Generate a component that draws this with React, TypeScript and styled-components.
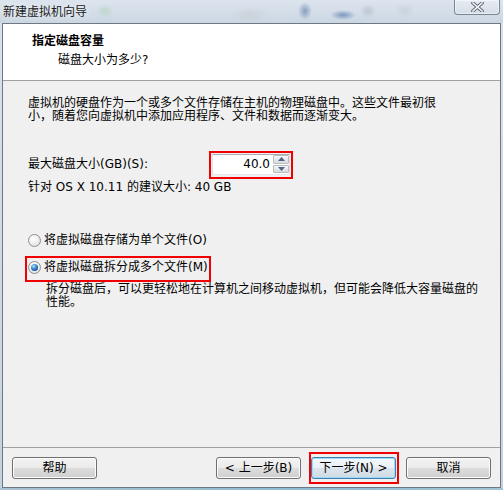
import React from "react";
import styled, { createGlobalStyle } from "styled-components";

const GlobalStyle = createGlobalStyle`
  html, body { margin: 0; padding: 0; }
  body {
    width: 503px;
    height: 490px;
    overflow: hidden;
    background: #c9d6e3;
    font-family: "DejaVu Sans", "Noto Sans CJK SC", sans-serif;
    font-size: 12px;
    color: #000;
  }
`;

const Window = styled.div`
  width: 503px;
  height: 490px;
  display: flex;
  flex-direction: column;
  background: linear-gradient(180deg, #d9e2ec 0%, #cdd8e4 60%, #c3d2e0 100%);
`;

const TitleBar = styled.div`
  height: 23px;
  flex: none;
  display: flex;
  align-items: flex-start;
  justify-content: space-between;
  background:
    radial-gradient(ellipse 7px 9px at 305px 11px, rgba(70, 105, 160, 0.55), transparent),
    radial-gradient(ellipse 13px 5px at 343px 15px, rgba(55, 95, 155, 0.55), transparent),
    radial-gradient(ellipse 8px 7px at 368px 11px, rgba(130, 140, 155, 0.3), transparent),
    radial-gradient(ellipse 10px 8px at 405px 10px, rgba(150, 160, 170, 0.18), transparent),
    radial-gradient(ellipse 9px 7px at 105px 11px, rgba(110, 190, 100, 0.22), transparent),
    radial-gradient(ellipse 20px 8px at 250px 14px, rgba(160, 150, 130, 0.15), transparent),
    linear-gradient(180deg, #dce4ed 0%, #d3dde8 60%, #cad6e2 100%);
`;

const TitleText = styled.div`
  padding: 4px 0 0 3px;
  line-height: 14px;
  font-family: "Noto Sans CJK SC", sans-serif;
  font-size: 12px;
  color: #1a1a1a;
  text-shadow: 0 0 6px rgba(255, 255, 255, 0.9);
`;

const CloseButton = styled.div`
  width: 44px;
  height: 14px;
  margin-right: 3px;
  border: 1px solid #7a8594;
  border-top: none;
  border-radius: 0 0 4px 4px;
  background: linear-gradient(180deg, rgba(235, 240, 246, 0.7), rgba(214, 222, 231, 0.7));
  box-shadow: inset 0 0 0 1px rgba(255, 255, 255, 0.45);
  display: flex;
  align-items: center;
  justify-content: center;
`;

const Client = styled.div`
  flex: 1;
  margin: 0 2px 0 2px;
  border: 1px solid #6f7882;
  display: flex;
  flex-direction: column;
  min-height: 0;
`;

const Header = styled.div`
  flex: none;
  background: #fff;
  border-bottom: 1px solid #a0a0a0;
  padding: 8px 0 0 29px;
  box-sizing: border-box;
  height: 57px;
`;

const HeaderTitle = styled.div`
  font-weight: bold;
  line-height: 16px;
  font-family: "Noto Sans CJK SC", sans-serif;
`;

const HeaderSub = styled.div`
  margin: 4px 0 0 26px;
  line-height: 16px;
`;

const Body = styled.div`
  flex: 1;
  background: #f0f0f0;
  padding: 16px 25px 0 25px;
  display: flex;
  flex-direction: column;
  align-items: flex-start;
`;

const Paragraph = styled.div`
  line-height: 13px;
  white-space: nowrap;
`;

const SpinRow = styled.div`
  margin-top: 31px;
  display: flex;
  align-items: center;
`;

const Label = styled.div`
  width: 184px;
  line-height: 13px;
`;

const Highlight = styled.div<{ $t: number; $r: number; $b: number; $l: number }>`
  position: relative;
  &::after {
    content: "";
    position: absolute;
    top: ${(p) => p.$t}px;
    right: ${(p) => p.$r}px;
    bottom: ${(p) => p.$b}px;
    left: ${(p) => p.$l}px;
    border: 2px solid #f00000;
    pointer-events: none;
  }
`;

const SpinBox = styled.div`
  width: 78px;
  height: 21px;
  box-sizing: border-box;
  border: 1px solid #abadb3;
  border-color: #abadb3 #dbdfe6 #e3e9ef #e2e3ea;
  background: #fff;
  display: flex;
  align-items: stretch;
`;

const SpinValue = styled.div`
  flex: 1;
  text-align: right;
  padding-right: 3px;
  line-height: 19px;
`;

const SpinButtons = styled.div`
  width: 16px;
  display: flex;
  flex-direction: column;
  gap: 1px;
  padding: 0 0 1px 0;
`;

const SpinBtn = styled.div`
  flex: 1;
  border: 1px solid #b9bcc1;
  border-radius: 1px;
  background: linear-gradient(180deg, #f6f6f6 0%, #e8e8e8 50%, #dadada 100%);
  display: flex;
  align-items: center;
  justify-content: center;
`;

const Hint = styled.div`
  margin-top: 6px;
  line-height: 13px;
`;

const RadioRow = styled.div<{ $gap: number }>`
  margin-top: ${(p) => p.$gap}px;
  display: inline-flex;
  align-items: center;
  gap: 3px;
  line-height: 13px;
`;

const RadioCircle = styled.span<{ $checked?: boolean }>`
  width: 13px;
  height: 13px;
  box-sizing: border-box;
  border-radius: 50%;
  border: 1px solid #8e8f8f;
  background: radial-gradient(circle at 40% 35%, #ffffff 0%, #f0f0f0 45%, #d2d2d2 100%);
  display: flex;
  align-items: center;
  justify-content: center;
  &::before {
    content: "";
    display: ${(p) => (p.$checked ? "block" : "none")};
    width: 7px;
    height: 7px;
    border-radius: 50%;
    background: radial-gradient(circle at 38% 32%, #b6e2fa 0%, #4a96d6 35%, #1a5a9e 70%, #0c3468 100%);
  }
`;

const Description = styled.div`
  margin-top: 9px;
  padding-left: 18px;
  line-height: 13px;
  white-space: nowrap;
`;

const Footer = styled.div`
  flex: none;
  height: 40px;
  box-sizing: border-box;
  border-top: 1px solid #a0a0a0;
  background: #f0f0f0;
  padding: 9px 9px 8px 9px;
  display: flex;
  align-items: center;
`;

const Spacer = styled.div`
  flex: 1;
`;

const ButtonGroup = styled.div`
  display: flex;
  gap: 10px;
`;

const Button = styled.div<{ $default?: boolean }>`
  width: 85px;
  height: 22px;
  box-sizing: border-box;
  border: 1px solid ${(p) => (p.$default ? "#3c7fb1" : "#707070")};
  border-radius: 3px;
  background: ${(p) =>
    p.$default
      ? "linear-gradient(180deg, #f4f8fb 0%, #eaf0f5 50%, #dce5ed 50%, #d0dbe5 100%)"
      : "linear-gradient(180deg, #f2f2f2 0%, #ebebeb 50%, #dddddd 50%, #cfcfcf 100%)"};
  box-shadow: inset 0 0 0 1px ${(p) => (p.$default ? "#9adcf7" : "#fcfcfc")};
  display: flex;
  align-items: center;
  justify-content: center;
  line-height: 13px;
  white-space: nowrap;
`;

const BottomEdge = styled.div`
  height: 2px;
  flex: none;
  background: linear-gradient(90deg, #a9c3d3, #8fbccf 60%, #a3c5d6);
`;

const Up = () => (
  <svg width="7" height="4" viewBox="0 0 7 4">
    <polygon points="0,4 7,4 3.5,0" fill="#4e6390" />
  </svg>
);

const Down = () => (
  <svg width="7" height="4" viewBox="0 0 7 4">
    <polygon points="0,0 7,0 3.5,4" fill="#4e6390" />
  </svg>
);

const CloseX = () => (
  <svg width="13" height="10" viewBox="0 0 13 10">
    <path d="M2 1 L11 9 M11 1 L2 9" stroke="#5d6673" strokeWidth="3.4" strokeLinecap="square" />
    <path d="M2 1 L11 9 M11 1 L2 9" stroke="#f4f6f8" strokeWidth="1.6" strokeLinecap="square" />
  </svg>
);

export default function App() {
  return (
    <>
      <GlobalStyle />
      <Window>
        <TitleBar>
          <TitleText>新建虚拟机向导</TitleText>
          <CloseButton>
            <CloseX />
          </CloseButton>
        </TitleBar>
        <Client>
          <Header>
            <HeaderTitle>指定磁盘容量</HeaderTitle>
            <HeaderSub>磁盘大小为多少?</HeaderSub>
          </Header>
          <Body>
            <Paragraph>
              虚拟机的硬盘作为一个或多个文件存储在主机的物理磁盘中。这些文件最初很
              <br />
              小，随着您向虚拟机中添加应用程序、文件和数据而逐渐变大。
            </Paragraph>
            <SpinRow>
              <Label>最大磁盘大小(GB)(S):</Label>
              <Highlight $t={-3} $r={-3} $b={-4} $l={-3}>
                <SpinBox>
                  <SpinValue>40.0</SpinValue>
                  <SpinButtons>
                    <SpinBtn>
                      <Up />
                    </SpinBtn>
                    <SpinBtn>
                      <Down />
                    </SpinBtn>
                  </SpinButtons>
                </SpinBox>
              </Highlight>
            </SpinRow>
            <Hint>针对 OS X 10.11 的建议大小: 40 GB</Hint>
            <RadioRow $gap={40}>
              <RadioCircle />
              <span>将虚拟磁盘存储为单个文件(O)</span>
            </RadioRow>
            <Highlight $t={9} $r={-3} $b={-8} $l={-3}>
              <RadioRow $gap={14}>
                <RadioCircle $checked />
                <span>将虚拟磁盘拆分成多个文件(M)</span>
              </RadioRow>
            </Highlight>
            <Description>
              拆分磁盘后，可以更轻松地在计算机之间移动虚拟机，但可能会降低大容量磁盘的
              <br />
              性能。
            </Description>
          </Body>
          <Footer>
            <Button>帮助</Button>
            <Spacer />
            <ButtonGroup>
              <Button>&lt; 上一步(B)</Button>
              <Highlight $t={-5} $r={-3} $b={-5} $l={-2}>
                <Button $default>下一步(N) &gt;</Button>
              </Highlight>
              <Button>取消</Button>
            </ButtonGroup>
          </Footer>
        </Client>
        <BottomEdge />
      </Window>
    </>
  );
}
